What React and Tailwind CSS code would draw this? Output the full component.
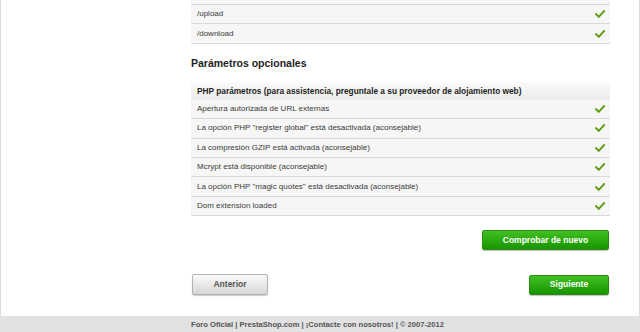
import React from "react";

const topRows = ["/upload", "/download"];

const optionalRows = [
  "Apertura autorizada de URL externas",
  'La opción PHP "register global" está desactivada (aconsejable)',
  "La compresión GZIP está activada (aconsejable)",
  "Mcrypt está disponible (aconsejable)",
  'La opción PHP "magic quotes" está desactivada (aconsejable)',
  "Dom extension loaded",
];

function Check() {
  return (
    <svg width="10" height="8" viewBox="0 0 10 8" className="shrink-0">
      <path
        d="M1 4.2 L3.8 6.8 L9.2 1"
        fill="none"
        stroke="#5a9a0c"
        strokeWidth="1.9"
        strokeLinecap="square"
      />
    </svg>
  );
}

function Row({ label }) {
  return (
    <div className="flex items-center justify-between h-[19.4px] pl-[6px] pr-[5px] bg-[#f6f6f6] border-b border-[#dadada] text-[8px] text-[#3a3a3a]">
      <span>{label}</span>
      <Check />
    </div>
  );
}

export default function App() {
  return (
    <div
      className="w-[640px] h-[332px] overflow-hidden flex flex-col bg-white"
      style={{ fontFamily: '"Liberation Sans", Arial, sans-serif' }}
    >
      <div className="flex-1 border-x border-[#dcdcdc] pl-[190px] pr-[29px] overflow-hidden">
        {/* required folders (end of list, scrolled) */}
        <div>
          <div className="h-[5px] bg-[#f6f6f6] border-b border-[#dadada]" />
          {topRows.map((r) => (
            <Row key={r} label={r} />
          ))}
        </div>

        <h2 className="mt-[12px] mb-[12px] text-[10.5px] leading-[14px] font-bold text-[#1e1e1e]">
          Parámetros opcionales
        </h2>

        <div>
          <div className="flex items-center h-[18px] pl-[6px] bg-linear-to-b from-[#fbfbfb] to-[#ebebeb] text-[8.3px] font-bold text-[#1e1e1e]">
            PHP parámetros (para assistencia, preguntale a su proveedor de alojamiento web)
          </div>
          {optionalRows.map((r) => (
            <Row key={r} label={r} />
          ))}
        </div>

        <div className="flex justify-end mt-[14px] pr-[1px]">
          <button className="w-[127px] h-[20px] rounded-[2px] border border-[#2b8c12] bg-linear-to-b from-[#40c11f] to-[#169400] text-white text-[8.5px] font-bold shadow-[0_1px_1px_rgba(0,0,0,0.25)]">
            Comprobar de nuevo
          </button>
        </div>

        <div className="flex justify-between items-center mt-[24px] pr-[1px]">
          <button className="ml-[1px] w-[76px] h-[21px] rounded-[2px] border border-[#b3b3b3] bg-linear-to-b from-[#fbfbfb] to-[#d6d6d6] text-[#555] text-[8.5px] font-bold shadow-[0_1px_1px_rgba(0,0,0,0.2)]">
            Anterior
          </button>
          <button className="w-[80px] h-[20px] rounded-[2px] border border-[#2b8c12] bg-linear-to-b from-[#40c11f] to-[#169400] text-white text-[8.5px] font-bold shadow-[0_1px_1px_rgba(0,0,0,0.25)]">
            Siguiente
          </button>
        </div>
      </div>

      <div className="h-[16px] shrink-0 bg-[#e2e2e2] flex items-center pt-[2px] pl-[191px] text-[7.6px] font-bold text-[#555]">
        Foro Oficial | PrestaShop.com | ¡Contacte con nosotros! | © 2007-2012
      </div>
    </div>
  );
}
